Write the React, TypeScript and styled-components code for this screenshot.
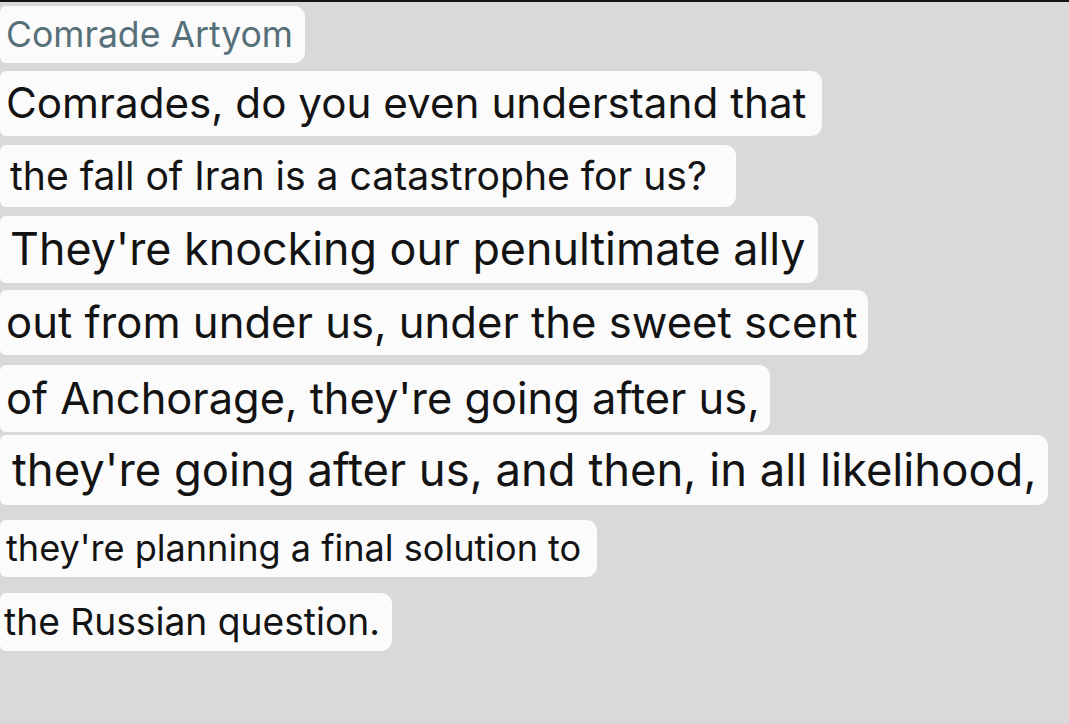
import React from 'react';
import styled, { createGlobalStyle } from 'styled-components';

const GlobalStyle = createGlobalStyle`
  html, body {
    margin: 0;
    padding: 0;
    background: #d9d9d9;
  }
`;

// 채팅 화면 전체
const Screen = styled.div`
  width: 1069px;
  height: 724px;
  box-sizing: border-box;
  border-top: 2px solid #141414;
  background: #d9d9d9;
  overflow: hidden;
  font-family: Inter, 'Noto Sans', sans-serif;
`;

const Stack = styled.div`
  display: flex;
  flex-direction: column;
  align-items: flex-start;
`;

// 한 줄짜리 말풍선
const Bubble = styled.div<{ $top: number; $h: number; $w: number; $pl: number }>`
  margin-top: ${p => p.$top}px;
  height: ${p => p.$h}px;
  width: ${p => p.$w}px;
  padding-left: ${p => p.$pl}px;
  box-sizing: border-box;
  display: flex;
  align-items: center;
  background: #fbfbfb;
  border-radius: 6px 11px 11px 6px;
  white-space: nowrap;
  overflow: hidden;
`;

const Line = styled.span<{ $size: number }>`
  font-size: ${p => p.$size}px;
  color: #131313;
  line-height: 1;
`;

const Name = styled(Line)`
  color: #56707a;
`;

const lines = [
  { text: 'Comrades, do you even understand that', top: 8, h: 65, w: 822, pl: 6, size: 42.2 },
  { text: 'the fall of Iran is a catastrophe for us?', top: 9, h: 62, w: 736, pl: 10, size: 39.1 },
  { text: "They're knocking our penultimate ally", top: 9, h: 67, w: 818, pl: 10, size: 44.8 },
  { text: 'out from under us, under the sweet scent', top: 7, h: 65, w: 868, pl: 6, size: 43.6 },
  { text: "of Anchorage, they're going after us,", top: 10, h: 67, w: 770, pl: 6, size: 43.4 },
  { text: "they're going after us, and then, in all likelihood,", top: 3, h: 70, w: 1048, pl: 12, size: 45.4 },
  { text: "they're planning a final solution to", top: 15, h: 57, w: 597, pl: 6, size: 36.1 },
  { text: 'the Russian question.', top: 16, h: 58, w: 392, pl: 4, size: 37.2 },
];

export default function App() {
  return (
    <>
      <GlobalStyle />
      <Screen>
        <Stack>
          <Bubble $top={4} $h={57} $w={305} $pl={6}>
            <Name $size={35.6}>Comrade Artyom</Name>
          </Bubble>
          {lines.map(l => (
            <Bubble key={l.text} $top={l.top} $h={l.h} $w={l.w} $pl={l.pl}>
              <Line $size={l.size}>{l.text}</Line>
            </Bubble>
          ))}
        </Stack>
      </Screen>
    </>
  );
}
